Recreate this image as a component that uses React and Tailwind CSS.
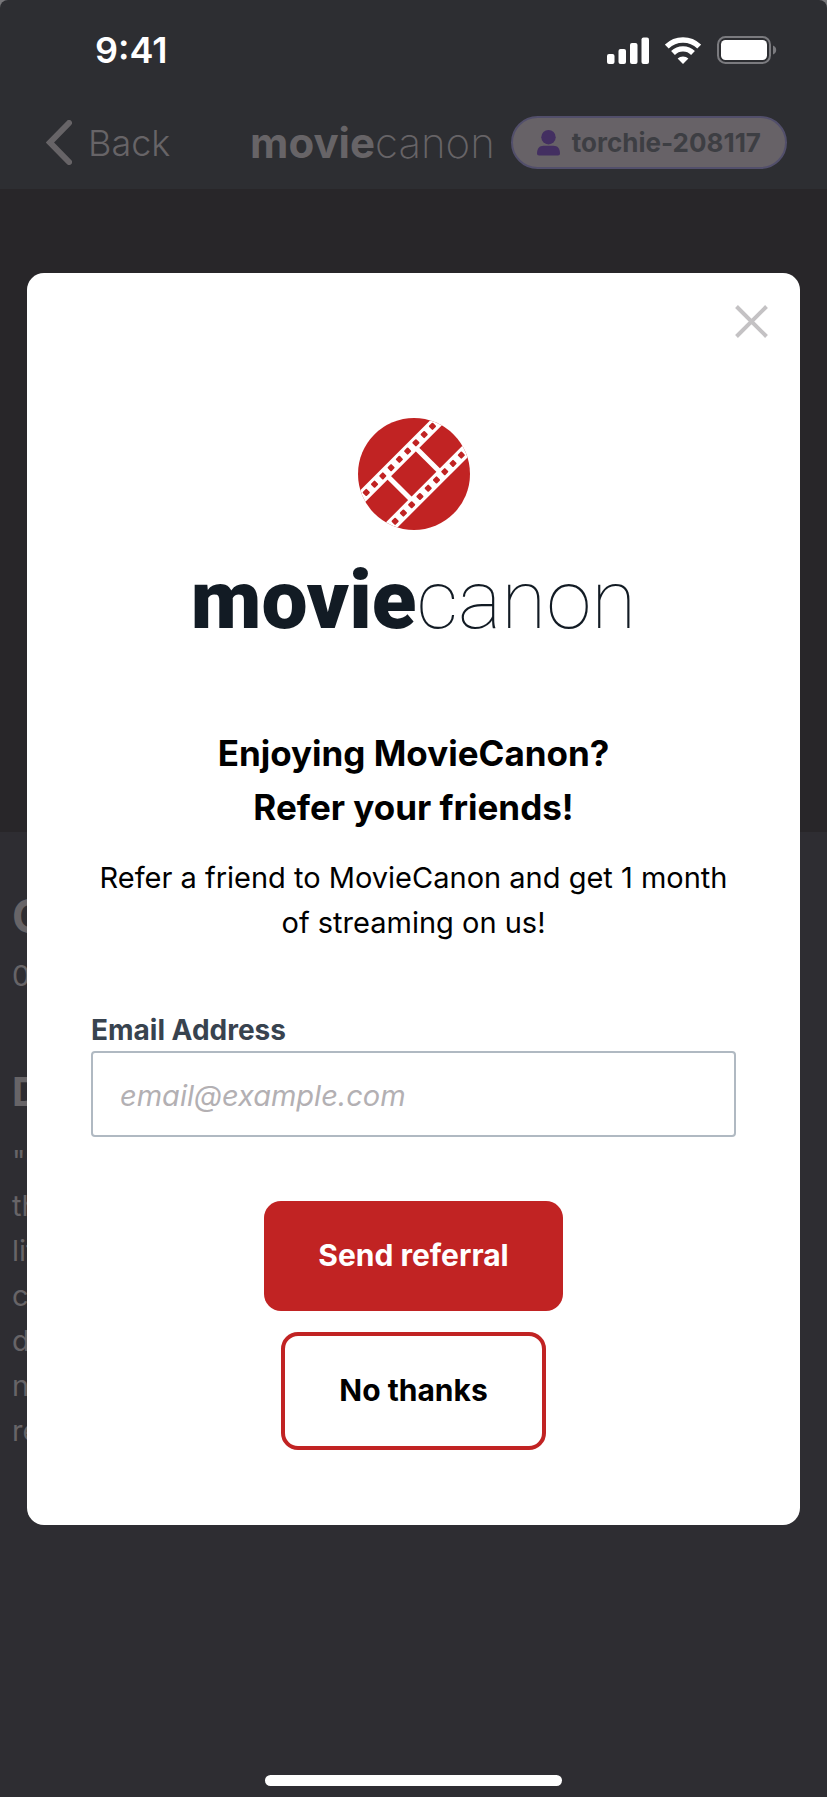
import React, { useState } from 'react';

const SPROCKETS = [-46.8, -35.1, -23.4, -11.7, 0, 11.7, 23.4, 35.1, 46.8];
const DESCRIPTION_LINES = ['"Old', 'the', 'life', 'city', 'day', 'new', 'reel'];

/** Signal, wifi and battery glyphs of the status bar */
function StatusIcons() {
    return (
        <div className="flex items-center gap-4">
            <svg width="42" height="27" viewBox="0 0 42 27" fill="#fff" aria-hidden="true">
                <rect x="0" y="17" width="7.5" height="10" rx="2" />
                <rect x="11.5" y="12" width="7.5" height="15" rx="2" />
                <rect x="23" y="6" width="7.5" height="21" rx="2" />
                <rect x="34.5" y="0.5" width="7.5" height="26.5" rx="2" />
            </svg>
            <svg width="36" height="27" viewBox="0 0 36 27" aria-hidden="true">
                <g fill="none" stroke="#fff" strokeWidth="5.4">
                    <path d="M1.8 9.6a23 23 0 0 1 32.4 0" />
                    <path d="M8 16a14.2 14.2 0 0 1 20 0" />
                </g>
                <path d="M18 27l-5.4-5.4a7.8 7.8 0 0 1 10.8 0z" fill="#fff" />
            </svg>
            <svg width="60" height="28" viewBox="0 0 60 28" aria-hidden="true">
                <rect x="1" y="1" width="52" height="26" rx="7.5" fill="none" stroke="#7b7b7f" strokeWidth="2" />
                <rect x="4" y="4" width="46" height="20" rx="4.5" fill="#fff" />
                <path d="M56 9.5c2 .8 3.2 2.5 3.2 4.5s-1.2 3.7-3.2 4.5z" fill="#7b7b7f" />
            </svg>
        </div>
    );
}

/** Round film strip logo */
function FilmLogo() {
    return (
        <svg width="112" height="112" viewBox="-56 -56 112 112" role="img" aria-label="MovieCanon">
            <clipPath id="disc"><circle r="56" /></clipPath>
            <circle r="56" fill="#c12323" />
            <g clipPath="url(#disc)">
                <g transform="rotate(-45)">
                    <g fill="#fff">
                        <rect x="-62" y="-26.5" width="124" height="11.8" />
                        <rect x="-62" y="14.3" width="124" height="11.8" />
                        <rect x="-22.7" y="-16" width="5" height="32" />
                        <rect x="17.3" y="-16" width="5" height="32" />
                    </g>
                    <g fill="#c12323">
                        {SPROCKETS.map((u) => (
                            <React.Fragment key={u}>
                                <rect x={u - 2.8} y="-23.5" width="5.6" height="5.6" rx="1" />
                                <rect x={u - 2.8} y="17.3" width="5.6" height="5.6" rx="1" />
                            </React.Fragment>
                        ))}
                    </g>
                </g>
            </g>
        </svg>
    );
}

function Header() {
    return (
        <header className="bg-[#2d2e32] h-[189px]">
            <div className="flex items-center justify-between h-[100px] pl-[95px] pr-[50px]">
                <span className="text-white text-[36px] font-semibold leading-none">9:41</span>
                <StatusIcons />
            </div>
            <nav className="flex items-center h-[85px] pl-[46px] pr-10 text-[#676467]">
                <a href="#" className="flex items-center gap-4 text-[36px] leading-none font-light">
                    <svg width="26" height="45" viewBox="0 0 26 45" fill="none" stroke="currentColor" strokeWidth="6" strokeLinecap="round" aria-hidden="true">
                        <path d="M23 3L4 22.5L23 42" />
                    </svg>
                    Back
                </a>
                <div className="ml-auto mr-4 text-[42px] leading-none">
                    <span className="font-bold">movie</span><span className="font-extralight">canon</span>
                </div>
                <button className="flex items-center gap-3 h-[53px] px-6 rounded-full border-2 border-[#524f6b] bg-[#676267] text-[#3d3e43] text-[26px] font-bold">
                    <svg width="23" height="26" viewBox="0 0 23 26" fill="#432f61" aria-hidden="true">
                        <circle cx="11.5" cy="7.2" r="7.2" />
                        <path d="M0 23.5c0-5 2.5-7.7 6.5-7.7h10c4 0 6.5 2.7 6.5 7.7 0 1.2-.8 2-2 2h-19c-1.2 0-2-.8-2-2z" />
                    </svg>
                    torchie-208117
                </button>
            </nav>
        </header>
    );
}

/** Movie page that stays dimmed behind the dialog */
function MoviePage() {
    return (
        <main className="flex-1 bg-[#2e2d32] text-[#676467]">
            <div className="h-[643px] bg-[#282629]" />
            <div className="px-3 pt-[52px]">
                <h1 className="text-[46px] leading-[64px] font-bold">C</h1>
                <p className="mt-[5px] text-[29px] leading-[45px]">01</p>
                <h2 className="mt-16 text-[40px] leading-[60px] font-bold">De</h2>
                <p className="mt-4 text-[29px] leading-[45px]">
                    {DESCRIPTION_LINES.map((line) => <span key={line} className="block">{line}</span>)}
                </p>
            </div>
        </main>
    );
}

function ReferralDialog() {
    const [email, setEmail] = useState('');

    const onSubmitHandler = (e) => {
        e.preventDefault();
    };

    return (
        <div className="absolute inset-0 flex items-center justify-center px-[27px]">
            <section role="dialog" aria-label="Refer your friends" className="relative w-full rounded-[17px] bg-white px-16 pt-[145px] pb-[75px] text-black">
                <button aria-label="Close" className="absolute top-8 right-8">
                    <svg width="33" height="33" viewBox="0 0 33 33" stroke="#c4c2c4" strokeWidth="4" aria-hidden="true">
                        <path d="M1.5 1.5l30 30M31.5 1.5l-30 30" />
                    </svg>
                </button>
                <div className="flex flex-col items-center">
                    <FilmLogo />
                    <div className="mt-7 font-[Roboto,sans-serif] text-[82px] leading-[84px] text-[#121b24]">
                        <span className="font-black">movie</span><span className="font-thin">canon</span>
                    </div>
                </div>
                <h2 className="mt-[84px] text-center text-[35px] leading-[54px] font-bold">
                    Enjoying MovieCanon?<br />Refer your friends!
                </h2>
                <p className="mt-[21px] text-center text-[29px] leading-[45px]">
                    Refer a friend to MovieCanon and get 1 month of streaming on us!
                </p>
                <form className="mt-16" onSubmit={onSubmitHandler}>
                    <label htmlFor="email" className="block text-[28px] leading-[42px] font-bold text-[#38434f]">Email Address</label>
                    <input
                        id="email"
                        type="email"
                        placeholder="email@example.com"
                        value={email}
                        onChange={(e) => setEmail(e.target.value)}
                        className="block w-full h-[86px] px-[27px] pt-1 rounded border-2 border-[#b0b9c2] text-[29px] placeholder:italic placeholder:text-[#b3b0b3]"
                    />
                    <div className="mt-16 flex flex-col items-center gap-[21px]">
                        <button type="submit" className="h-[110px] px-[54px] rounded-[17px] bg-[#c12323] text-white text-[30px] font-bold">Send referral</button>
                        <button type="button" className="h-[118px] px-[54px] rounded-[17px] border-4 border-[#c12323] text-[30px] font-bold">No thanks</button>
                    </div>
                </form>
            </section>
        </div>
    );
}

export default function App() {
    return (
        <div className="bg-[#77777a] font-[Inter,sans-serif]">
            <div className="relative flex flex-col min-h-screen overflow-hidden rounded-t-lg">
                <Header />
                <MoviePage />
                <ReferralDialog />
                <div className="absolute bottom-[11px] inset-x-0 mx-auto w-[36%] h-[11px] rounded-full bg-white" />
            </div>
        </div>
    );
}
